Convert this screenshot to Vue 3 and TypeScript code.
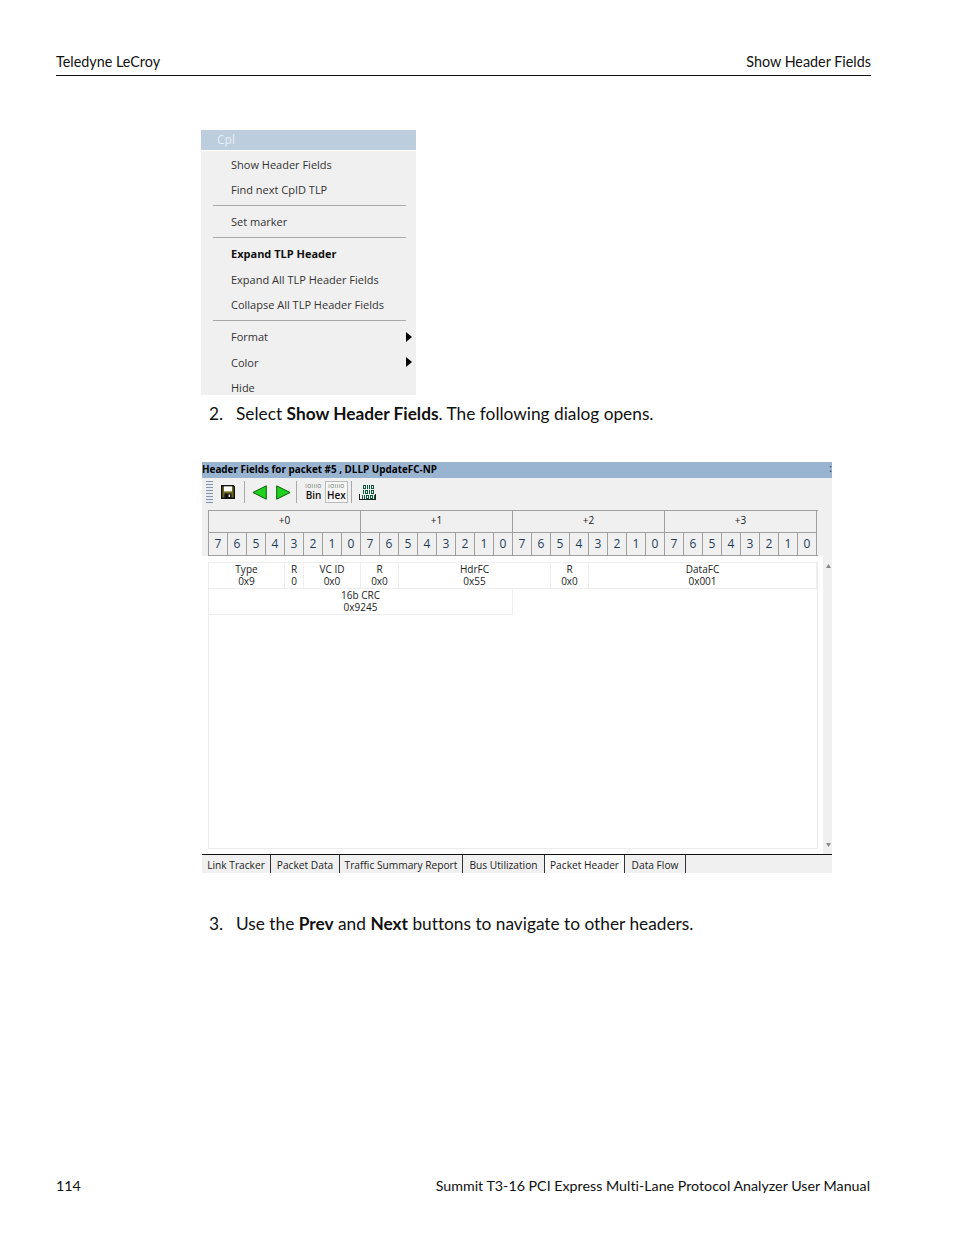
<script setup lang="ts">
const menuGroups: { label: string; bold?: boolean; arrow?: boolean }[][] = [
  [{ label: 'Show Header Fields' }, { label: 'Find next CpID TLP' }],
  [{ label: 'Set marker' }],
  [{ label: 'Expand TLP Header', bold: true }, { label: 'Expand All TLP Header Fields' }, { label: 'Collapse All TLP Header Fields' }],
  [{ label: 'Format', arrow: true }, { label: 'Color', arrow: true }, { label: 'Hide' }]
]
const offsets = ['+0', '+1', '+2', '+3']
const bits = [7, 6, 5, 4, 3, 2, 1, 0]
const fields = [
  { name: 'Type', value: '0x9', span: 4 },
  { name: 'R', value: '0', span: 1 },
  { name: 'VC ID', value: '0x0', span: 3 },
  { name: 'R', value: '0x0', span: 2 },
  { name: 'HdrFC', value: '0x55', span: 8 },
  { name: 'R', value: '0x0', span: 2 },
  { name: 'DataFC', value: '0x001', span: 12 },
  { name: '16b CRC', value: '0x9245', span: 16 }
]
const tabs = [
  { label: 'Link Tracker', width: 69 },
  { label: 'Packet Data', width: 69 },
  { label: 'Traffic Summary Report', width: 123 },
  { label: 'Bus Utilization', width: 82 },
  { label: 'Packet Header', width: 80 },
  { label: 'Data Flow', width: 61 }
]
</script>

<template>
  <div class="page">
    <header class="running-head">
      <span>Teledyne LeCroy</span>
      <span>Show Header Fields</span>
    </header>

    <div class="menu">
      <div class="menu-title">Cpl</div>
      <div class="menu-body">
        <template v-for="(group, g) in menuGroups" :key="g">
          <div v-if="g > 0" class="menu-sep"></div>
          <div v-for="item in group" :key="item.label" class="menu-item" :class="{ bold: item.bold }">
            <span>{{ item.label }}</span>
            <i v-if="item.arrow" class="menu-arrow"></i>
          </div>
        </template>
      </div>
    </div>

    <p class="step first"><span class="num">2.</span><span>Select <b>Show Header Fields</b>. The following dialog opens.</span></p>

    <div class="dialog">
      <div class="dialog-title">Header Fields for packet #5 , DLLP UpdateFC-NP</div>
      <div class="toolbar">
        <div class="grip"></div>
        <svg class="ico save" width="14" height="14" viewBox="0 0 14 14">
          <path d="M.7.7h11.600l1 1v11.600H.7z" fill="#6b6a1e" stroke="#111" stroke-width="1.400"/>
          <rect x="3" y="1.400" width="8" height="5" fill="#fff"/>
          <rect x="3.500" y="8.500" width="7" height="4.500" fill="#111"/>
          <rect x="7.500" y="9.500" width="1.600" height="2.500" fill="#ddd"/>
        </svg>
        <div class="tsep a"></div>
        <svg class="ico" width="15" height="15" viewBox="0 0 15 15"><path d="M14.300.8v13.400L.9 7.500z" fill="#1fd11f" stroke="#0d5c0d"/></svg>
        <svg class="ico next" width="15" height="15" viewBox="0 0 15 15"><path d="M.7.8v13.400l13.400-6.700z" fill="#1fd11f" stroke="#0d5c0d"/></svg>
        <div class="tsep b"></div>
        <div class="mode"><small>IOIIIO</small><span>Bin</span></div>
        <div class="mode on"><small>IOIIIO</small><span>Hex</span></div>
        <div class="tsep c"></div>
        <svg class="ico" width="17" height="15" viewBox="0 0 17 15" fill="none" stroke="#0a5a3a" stroke-width="1" shape-rendering="crispEdges">
          <path d="M4.500 .5h2v3h-2zM8.500 0v4M10.500 0v4M12.500 .5h2v3h-2zM4.500 5v4M6.500 5.500h2v3h-2zM10.500 5v4M12.500 5.500h2v3h-2zM3.500 10v3.500M5.500 10v3.500M7.500 10.500h2v3h-2zM11.500 10.500h2v3h-2zM15 10v3.500"/>
          <path d="M.5 9v5.500h16V9" stroke="#222"/>
        </svg>
      </div>

      <div class="head-grid">
        <div v-for="o in offsets" :key="o" class="off">{{ o }}</div>
        <template v-for="o in offsets" :key="o">
          <div v-for="b in bits" :key="o + b" class="bit">{{ b }}</div>
        </template>
      </div>

      <div class="field-area">
        <div class="field-box">
          <div class="field-grid">
            <div v-for="(f, i) in fields" :key="i" class="field" :style="{ gridColumn: 'span ' + f.span }">
              <span>{{ f.name }}</span>
              <span>{{ f.value }}</span>
            </div>
          </div>
        </div>
      </div>

      <div class="scroll">
        <svg width="5" height="4" viewBox="0 0 5 4"><path d="M2.500 0L5 4H0z" fill="#888"/></svg>
        <svg width="5" height="4" viewBox="0 0 5 4"><path d="M0 0h5L2.500 4z" fill="#888"/></svg>
      </div>

      <div class="tabs">
        <div
          v-for="t in tabs"
          :key="t.label"
          class="tab"
          :class="{ active: t.label === 'Packet Header' }"
          :style="{ width: t.width + 'px' }"
        >{{ t.label }}</div>
      </div>
      <span class="close-mark">:</span>
    </div>

    <p class="step second"><span class="num">3.</span><span>Use the <b>Prev</b> and <b>Next</b> buttons to navigate to other headers.</span></p>

    <footer class="running-foot">
      <span>114</span>
      <span>Summit T3-16 PCI Express Multi-Lane Protocol Analyzer User Manual</span>
    </footer>
  </div>
</template>

<style scoped>
.page {
  box-sizing: border-box;
  width: 954px;
  height: 1235px;
  padding: 53px 83px 0 56px;
  display: flex;
  flex-direction: column;
  background: #fff;
  color: #111;
  font-family: Lato, "Liberation Sans", sans-serif;
  font-variant-ligatures: none;
  overflow: hidden;
}
.running-head,
.running-foot {
  display: flex;
  justify-content: space-between;
  line-height: 17px;
}
.running-head {
  width: 815px;
  padding-bottom: 5px;
  border-bottom: 1px solid #111;
  font-size: 14.35px;
}
.running-foot {
  width: 814px;
  margin-top: 243px;
  font-size: 14.25px;
}
.menu {
  width: 215px;
  height: 265px;
  margin: 54px 0 0 145px;
  background: #f0f0f0;
  font-family: "Open Sans", "Noto Sans", sans-serif;
  font-size: 11px;
  color: #333;
  overflow: hidden;
}
.menu-title {
  height: 20px;
  line-height: 19px;
  padding-left: 16px;
  background: #bccddd;
  border-bottom: 1px solid #fff;
  color: #e8eef4;
  font-size: 12px;
}
.menu-body {
  padding-top: .5px;
}
.menu-item {
  height: 25.5px;
  line-height: 25px;
  padding: 0 4px 0 30px;
  display: flex;
  justify-content: space-between;
  align-items: center;
}
.menu-item.bold {
  font-weight: 700;
  color: #111;
}
.menu-sep {
  height: 1px;
  margin: 2.500px 10px 3px 12px;
  background: #a9a9a9;
}
.menu-arrow {
  width: 0;
  height: 0;
  border-left: 6px solid #000;
  border-top: 5px solid transparent;
  border-bottom: 5px solid transparent;
}
.step {
  display: flex;
  margin: 0;
  font-size: 17.3px;
  line-height: 21px;
  color: #111;
}
.step .num {
  width: 27px;
}
.step.first {
  margin: 8px 0 0 153px;
}
.step.second {
  margin: 40px 0 0 153px;
}
.dialog {
  position: relative;
  width: 630px;
  height: 411px;
  margin: 38px 0 0 146px;
  background: #f0f0f0;
  font-family: "Open Sans", "Noto Sans", sans-serif;
  font-size: 10px;
  color: #222;
  display: flex;
  flex-direction: column;
}
.dialog-title {
  height: 16px;
  flex: none;
  line-height: 15px;
  background: #99b4d1;
  color: #000;
  font-size: 9.9px;
  font-weight: 700;
  white-space: nowrap;
}
.close-mark {
  position: absolute;
  right: 0;
  top: 0;
  font-size: 10px;
  line-height: 13px;
}
.toolbar {
  height: 32px;
  flex: none;
  box-sizing: border-box;
  padding: 0 0 4px 4px;
  display: flex;
  align-items: center;
}
.grip {
  width: 7px;
  height: 23px;
  margin-right: 8px;
  background: repeating-linear-gradient(to bottom, #8a93a8 0 1px, #e6ebf4 1px 3px);
}
.ico {
  flex: none;
}
.ico.next {
  margin-left: 9px;
}
.tsep {
  width: 1px;
  height: 22px;
  background: #a8a8a8;
}
.tsep.a {
  margin: 0 7px 0 9px;
}
.tsep.b {
  margin: 0 5px 0 5px;
}
.tsep.c {
  margin: 0 7px 0 3px;
}
.mode {
  width: 23px;
  height: 22px;
  box-sizing: border-box;
  display: flex;
  flex-direction: column;
  align-items: center;
  line-height: 11px;
  padding-top: 2px;
  font-size: 10px;
  font-weight: 600;
  color: #111;
}
.mode small {
  font-size: 5px;
  line-height: 7px;
  letter-spacing: .5px;
  font-weight: 400;
  color: #555;
}
.mode.on {
  border: 1px solid #bbb;
  padding-top: 1px;
  background: #f6f6f6;
}
.head-grid {
  flex: none;
  display: grid;
  grid-template-columns: repeat(32, 19px);
  grid-template-rows: 22px 22px;
  width: 610px;
  box-sizing: border-box;
  margin-left: 6px;
  border-top: 1px solid #a0a0a0;
  border-left: 1px solid #a0a0a0;
  border-bottom: 1px solid #a0a0a0;
}
.off {
  grid-column: span 8;
  text-align: center;
  line-height: 18px;
  border-right: 1px solid #a0a0a0;
  border-bottom: 1px solid #a0a0a0;
  font-size: 10px;
}
.bit {
  text-align: center;
  line-height: 21px;
  font-size: 12px;
  border-right: 1px solid #a0a0a0;
  color: #1d3d5c;
}
.field-area {
  flex: 1;
  width: 621px;
  box-sizing: border-box;
  padding: 6px 6px 5px;
  background: #fff;
  display: flex;
}
.field-box {
  flex: 1;
  border: 1px solid #ececec;
  border-top: 0;
}
.field-grid {
  display: grid;
  grid-template-columns: repeat(32, 19px);
  grid-auto-rows: 26px;
  border-top: 1px solid #eee;
}
.field {
  display: flex;
  flex-direction: column;
  align-items: center;
  line-height: 12px;
  box-sizing: border-box;
  font-size: 10px;
  border-right: 1px solid #eee;
  border-bottom: 1px solid #eee;
}
.scroll {
  position: absolute;
  right: 0;
  top: 102px;
  width: 8px;
  height: 283px;
  display: flex;
  flex-direction: column;
  justify-content: space-between;
  align-items: center;
}
.tabs {
  height: 18px;
  flex: none;
  display: flex;
  border-top: 1px solid #111;
  font-size: 10.2px;
}
.tab {
  box-sizing: border-box;
  text-align: center;
  line-height: 21px;
  border-right: 1px solid #333;
  white-space: nowrap;
}
.tab.active {
  background: #fbfbfb;
}
</style>

<style>
html, body { background: #fff; }
</style>
